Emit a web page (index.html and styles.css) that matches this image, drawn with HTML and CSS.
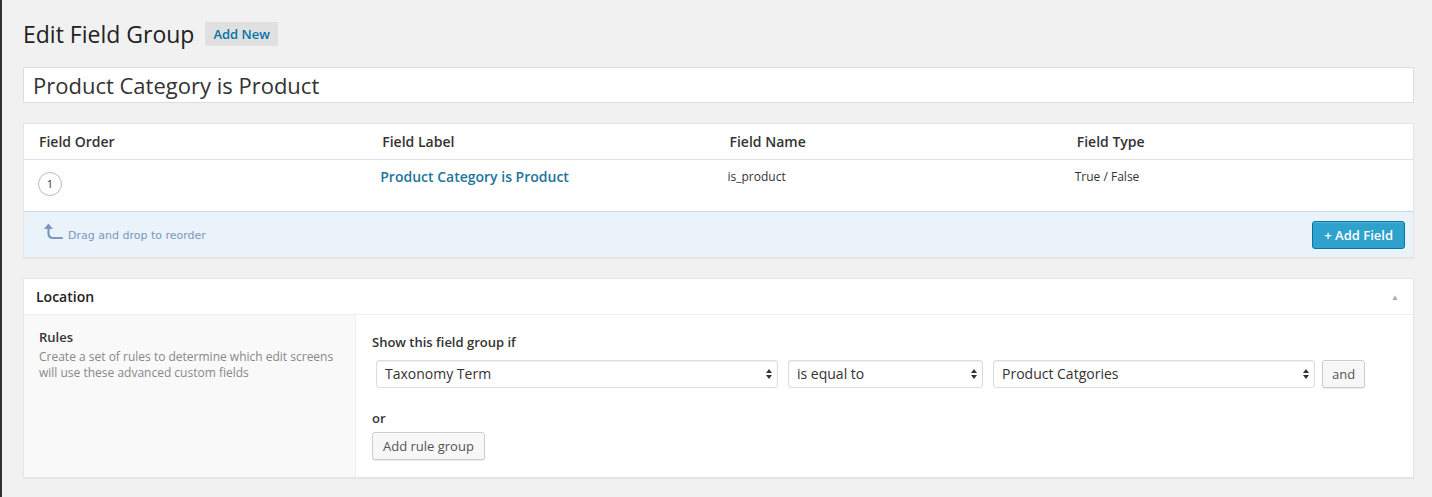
FILE: index.html
```html
<!DOCTYPE html>
<html>
<head>
<meta charset="utf-8">
<title>Edit Field Group</title>
<link rel="stylesheet" href="styles.css">
</head>
<body>
<div class="wrap">
  <div class="page-head">
    <h1 class="page-title">Edit Field Group</h1>
    <a class="add-new">Add New</a>
  </div>

  <div class="title-input">Product Category is Product</div>

  <div class="box fields">
    <div class="fields-row fields-head">
      <div class="col col-order">Field Order</div>
      <div class="col">Field Label</div>
      <div class="col">Field Name</div>
      <div class="col">Field Type</div>
    </div>
    <div class="fields-row field-item">
      <div class="col col-order"><span class="order-circle">1</span></div>
      <div class="col"><a class="field-label">Product Category is Product</a></div>
      <div class="col small">is_product</div>
      <div class="col small">True / False</div>
    </div>
    <div class="fields-foot">
      <div class="drag-hint">
        <svg class="drag-arrow" width="22" height="22" viewBox="0 0 22 22">
          <path d="M20 17 H11 Q6.5 17 6.5 12 V5" fill="none" stroke="#7b97bd" stroke-width="2.2" stroke-linecap="round"/>
          <path d="M2 8 L6.5 2.5 L11 8 Z" fill="#7b97bd"/>
        </svg>
        <span>Drag and drop to reorder</span>
      </div>
      <a class="btn-primary">+ Add Field</a>
    </div>
  </div>

  <div class="box location">
    <div class="box-head">
      <span class="box-title">Location</span>
      <span class="collapse">&#9650;</span>
    </div>
    <div class="loc-body">
      <div class="loc-label">
        <div class="label-title">Rules</div>
        <p class="label-desc">Create a set of rules to determine which edit screens will use these advanced custom fields</p>
      </div>
      <div class="loc-rules">
        <div class="rules-title">Show this field group if</div>
        <div class="rule-row">
          <div class="select sel-param">Taxonomy Term<span class="updown"></span></div>
          <div class="select sel-op">is equal to<span class="updown"></span></div>
          <div class="select sel-value">Product Catgories<span class="updown"></span></div>
          <a class="btn">and</a>
        </div>
        <div class="or-label">or</div>
        <a class="btn btn-group">Add rule group</a>
      </div>
    </div>
  </div>
</div>
</body>
</html>
```

FILE: styles.css
```css
html, body {
  margin: 0;
  padding: 0;
}
body {
  background: #f1f1f1;
  font-family: "Open Sans", "Noto Sans", sans-serif;
  color: #444;
  border-left: 2px solid #2e3236;
  min-height: 497px;
  box-sizing: border-box;
}
.wrap {
  padding: 19px 18px 0 21px;
}
.page-head {
  display: flex;
  align-items: center;
  height: 30px;
  gap: 11px;
}
.page-title {
  margin: 0;
  font-size: 23px;
  font-weight: 400;
  color: #222;
  line-height: 30px;
}
.add-new {
  background: #e0e0e0;
  color: #0073aa;
  font-size: 13px;
  font-weight: 600;
  padding: 0 8px;
  height: 24px;
  line-height: 24px;
}
.title-input {
  margin-top: 18px;
  height: 36px;
  box-sizing: border-box;
  background: #fff;
  border: 1px solid #ddd;
  font-size: 22px;
  line-height: 34px;
  padding: 0 9px;
  color: #333;
}
.box {
  background: #fff;
  border: 1px solid #e5e5e5;
  box-shadow: 0 1px 1px rgba(0,0,0,.04);
}
.fields {
  margin-top: 20px;
}
.fields-row {
  display: grid;
  grid-template-columns: repeat(4, 1fr);
}
.fields-head {
  height: 35px;
  align-items: center;
  border-bottom: 1px solid #e1e1e1;
  font-size: 14px;
  font-weight: 600;
  color: #333;
}
.col {
  padding-left: 11px;
}
.col-order {
  padding-left: 15px;
}
.field-item {
  height: 51px;
  box-sizing: border-box;
  padding-top: 7px;
  align-items: start;
}
.field-item .col {
  padding-left: 9px;
  line-height: 18px;
}
.field-item .col-order {
  padding-left: 14px;
  padding-top: 1px;
}
.field-item .small {
  padding-top: 1px;
}
.order-circle {
  display: inline-flex;
  align-items: center;
  justify-content: center;
  width: 22px;
  height: 22px;
  border: 1px solid #bbb;
  border-radius: 50%;
  font-size: 11px;
  color: #333;
  margin-top: 4px;
}
.field-label {
  color: #21759b;
  font-weight: 600;
  font-size: 14px;
}
.small {
  font-size: 12px;
  color: #333;
}
.fields-foot {
  display: flex;
  align-items: center;
  justify-content: space-between;
  height: 46px;
  box-sizing: border-box;
  background: #eaf2fa;
  border-top: 1px solid #c7d7e2;
  padding: 0 8px 0 18px;
}
.drag-hint {
  display: flex;
  align-items: center;
  gap: 4px;
  color: #7b97bd;
  font-family: "DejaVu Sans", sans-serif;
  font-size: 11px;
  padding-top: 2px;
}
.drag-arrow {
  margin-top: -8px;
}
.btn-primary {
  background: #2ea2cc;
  border: 1px solid #0074a2;
  color: #fff;
  font-size: 13px;
  font-weight: 600;
  height: 28px;
  line-height: 26px;
  box-sizing: border-box;
  padding: 0 11px;
  border-radius: 3px;
  box-shadow: inset 0 1px 0 rgba(120,200,230,.5);
}
.location {
  margin-top: 20px;
}
.box-head {
  display: flex;
  align-items: center;
  justify-content: space-between;
  height: 36px;
  box-sizing: border-box;
  border-bottom: 1px solid #eee;
  padding: 0 14px 0 12px;
}
.box-title {
  font-size: 14px;
  font-weight: 600;
  color: #222;
}
.collapse {
  font-size: 8px;
  color: #aaa;
}
.loc-body {
  display: grid;
  grid-template-columns: 332px 1fr;
  min-height: 162px;
}
.loc-label {
  background: #f9f9f9;
  border-right: 1px solid #eee;
  padding: 14px 15px;
}
.label-title {
  font-size: 13px;
  font-weight: 600;
  color: #333;
  line-height: 16px;
}
.label-desc {
  margin: 4px 0 0;
  font-size: 12px;
  line-height: 16px;
  color: #888;
}
.loc-rules {
  padding: 19px 15px 0 16px;
}
.rules-title {
  font-size: 13px;
  font-weight: 600;
  color: #333;
  line-height: 16px;
}
.rule-row {
  display: flex;
  align-items: center;
  margin: 10px 0 0 4px;
  gap: 10px;
}
.select {
  position: relative;
  height: 28px;
  box-sizing: border-box;
  border: 1px solid #ddd;
  border-radius: 3px;
  background: #fff;
  box-shadow: inset 0 1px 2px rgba(0,0,0,.07);
  font-size: 14px;
  line-height: 26px;
  padding: 0 8px;
  color: #333;
}
.updown {
  position: absolute;
  right: 5px;
  top: 8px;
  width: 0;
  height: 0;
  border-left: 3px solid transparent;
  border-right: 3px solid transparent;
  border-bottom: 4px solid #333;
}
.updown::after {
  content: "";
  position: absolute;
  left: -3px;
  top: 6px;
  border-left: 3px solid transparent;
  border-right: 3px solid transparent;
  border-top: 4px solid #333;
}
.sel-param { width: 402px; }
.sel-op { width: 195px; }
.sel-value { width: 322px; }
.btn {
  display: inline-block;
  height: 28px;
  box-sizing: border-box;
  border: 1px solid #ccc;
  background: #f7f7f7;
  box-shadow: inset 0 1px 0 #fff, 0 1px 0 rgba(0,0,0,.08);
  border-radius: 3px;
  font-size: 13px;
  line-height: 26px;
  padding: 0 10px;
  color: #555;
}
.rule-row .btn {
  margin-left: -3px;
  padding: 0 9px;
}
.or-label {
  margin-top: 22px;
  font-size: 13px;
  font-weight: 600;
  color: #333;
  line-height: 16px;
}
.btn-group {
  margin-top: 6px;
  padding: 0 10px;
}
```
